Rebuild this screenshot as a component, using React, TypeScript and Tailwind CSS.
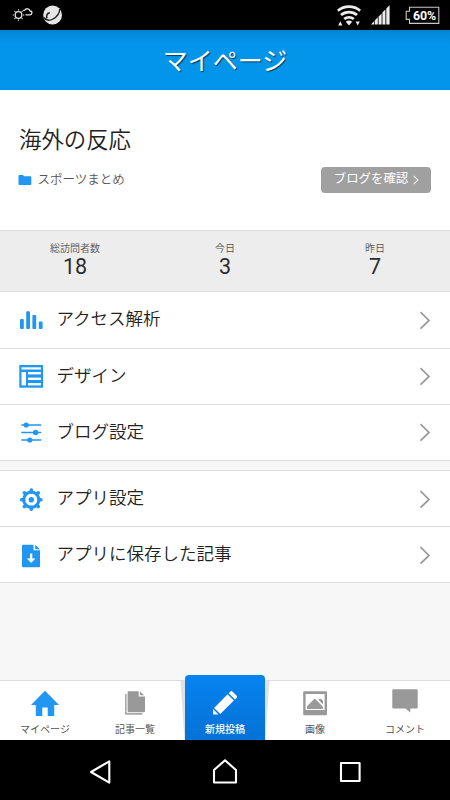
import React from 'react';

const BLUE = '#2196f3';
const GRAY = '#999999';

const StatusBar: React.FC = () => (
  <div className="flex h-[30px] shrink-0 items-center justify-between bg-black pl-3 pr-2.5">
    <div className="flex items-center gap-[9px]">
      <svg width="22" height="16" viewBox="0 0 22 16" fill="none" stroke="#e4e4e4">
        <circle cx="6.5" cy="8" r="3.3" strokeWidth="1.3" />
        <path
          d="M6.500 2.300v1.200M6.500 12.500v1.200M.8 8H2M11 8h1.200M2.500 4l.8.8M9.700 11.200l.8.8M2.500 12l.8-.8M9.700 4.800l.8-.8"
          strokeWidth="1.1"
        />
        <path d="M13.500 7.800h4.400a1.900 1.900 0 0 0 .2-3.800 3 3 0 0 0-5.400-.9 2 2 0 0 0-1.500.6" strokeWidth="1.3" />
      </svg>
      <svg width="20" height="20" viewBox="0 0 20 20">
        <circle cx="9.6" cy="10" r="9.4" fill="#e6e6e6" />
        <path
          d="M.8 12.500C3 15.600 6.500 15.900 10 14c4.200-2.200 6.600-5.800 6.800-10"
          fill="none"
          stroke="#1c1c1c"
          strokeWidth="1.4"
        />
        <path d="M6.800 7.800c-2.400.2-3.600 2.400-3 5.600" fill="none" stroke="#1c1c1c" strokeWidth="1.5" />
      </svg>
    </div>
    <div className="flex items-center">
      <svg width="24" height="21" viewBox="0 0 24 21" fill="none" stroke="#ececec" strokeWidth="2.8">
        <path d="M.8 5.800a17.400 17.400 0 0 1 22.400 0" />
        <path d="M4 10a12.400 12.400 0 0 1 16 0" />
        <path d="M7.200 14a7.800 7.800 0 0 1 9.600 0" />
        <path d="M8.800 16.800a5.400 5.400 0 0 1 6.400 0L12 20.400z" fill="#ececec" stroke="none" />
        <path d="M1.200 20.400l2.100-4.200 2.100 4.200zM18.600 16.400h4.200l-2.100 4z" fill="#ececec" stroke="none" />
      </svg>
      <svg className="ml-[10px]" width="19" height="20" viewBox="0 0 19 20" fill="#ececec">
        <path d="M0 19.400 3.200 16v3.400zM3.900 15.300l2.900-3v7.100H3.900zM7.600 11.500l3-3.100v11H7.600zM11.400 7.600l3-3.100v14.900h-3zM15.300 3.500 18.600.2v19.200h-3.300z" />
      </svg>
      <div className="relative ml-[15px] h-[19px] w-[35px]">
        <svg className="absolute inset-0" width="35" height="19" viewBox="0 0 35 19" fill="none" stroke="#c9c9c9">
          <path d="M4.500 1.200h29.300v16.200H4.500v-4H1.200V5.200h3.300z" strokeWidth="1.1" />
        </svg>
        <span className="absolute left-[8px] top-0 font-['Roboto'] text-[12.4px] font-bold leading-[19px] tracking-[-0.1px] text-white">
          60%
        </span>
      </div>
    </div>
  </div>
);

const Header: React.FC = () => (
  <header className="flex h-[60px] shrink-0 justify-center bg-[linear-gradient(#0282cd_0px,#038de0_5px,#0395ea_14px)]">
    <h1 className="text-[25px] leading-[58px] text-white [text-shadow:1px_1px_1px_rgba(0,0,0,0.6)]">マイページ</h1>
  </header>
);

const BlogCard: React.FC = () => (
  <section className="h-[140px] shrink-0 bg-white pl-[18px] pr-[19px] pt-8">
    <h2 className="pl-px text-[22.4px] font-[350] leading-[33px] text-[#222]">海外の反応</h2>
    <div className="mt-3 flex items-center justify-between">
      <div className="flex items-center">
        <svg width="14" height="12" viewBox="0 0 14 12" fill={BLUE}>
          <path d="M.5 1.800Q.5 1 1.300 1h3.600l1.300 1.300h6.300q.8 0 .8.8v7.200q0 .8-.8.8H1.300q-.8 0-.8-.8z" />
        </svg>
        <span className="ml-[5.5px] pb-0.5 text-[12.5px] font-[350] leading-5 text-[#555]">スポーツまとめ</span>
      </div>
      <button className="flex h-[26px] w-[110px] items-center justify-center rounded bg-[#a0a0a0] pb-1 pl-0.5 text-[12.4px] leading-5 text-white">
        ブログを確認
        <svg className="ml-1 mt-[3px]" width="8" height="10" viewBox="0 0 8 10" fill="none" stroke="#eee" strokeWidth="1.1">
          <path d="M1.600.8 6 5 1.600 9.200" />
        </svg>
      </button>
    </div>
  </section>
);

const stats = [
  { label: '総訪問者数', value: 18 },
  { label: '今日', value: 3 },
  { label: '昨日', value: 7 },
];

const Stats: React.FC = () => (
  <section className="grid h-[62px] shrink-0 grid-cols-3 border-y border-[#dcdcdc] bg-[#ededed] pt-[9px] text-center">
    {stats.map((s) => (
      <div key={s.label}>
        <div className="text-[10px] font-[350] leading-[15px] text-[#555]">{s.label}</div>
        <div className="font-['Roboto'] text-[21.5px] leading-[23px] text-[#2c2c2c]">{s.value}</div>
      </div>
    ))}
  </section>
);

const ChartIcon = () => (
  <svg width="26" height="26" viewBox="0 0 26 26" fill={BLUE}>
    <rect x="2" y="12" width="3.8" height="10" rx="1" />
    <rect x="8.2" y="4.2" width="3.8" height="17.8" rx="1" />
    <rect x="14.4" y="8" width="3.8" height="14" rx="1" />
    <rect x="20.8" y="14.4" width="3.8" height="7.6" rx="1" />
  </svg>
);

const LayoutIcon = () => (
  <svg width="26" height="26" viewBox="0 0 26 26">
    <rect x="1.3" y="2" width="23.8" height="22.7" fill={BLUE} />
    <g fill="#fff">
      <rect x="3.500" y="4.300" width="19.400" height="2.200" />
      <rect x="3.500" y="9" width="4.500" height="13.400" />
      <rect x="10" y="9" width="12.900" height="2.400" />
      <rect x="10" y="14.600" width="12.900" height="2.400" />
      <rect x="10" y="20" width="12.900" height="2.400" />
    </g>
  </svg>
);

const SlidersIcon = () => (
  <svg width="26" height="26" viewBox="0 0 26 26" fill={BLUE} stroke={BLUE} strokeWidth="1.5">
    <path d="M3.300 6h19.900M3.300 13.400h19.900M3.300 21h19.900" />
    <g stroke="none">
      <circle cx="8.2" cy="6" r="2.6" />
      <circle cx="17.6" cy="13.4" r="2.6" />
      <circle cx="11.8" cy="21" r="2.6" />
    </g>
  </svg>
);

const GearIcon = () => (
  <svg width="26" height="26" viewBox="0 0 26 26" fill="none" stroke={BLUE}>
    <circle cx="13.3" cy="13.7" r="7.6" strokeWidth="3" />
    <circle cx="13.3" cy="13.7" r="2.7" fill={BLUE} stroke="none" />
    <path
      d="M13.300 4.100v2M13.300 21.300v2M3.700 13.700h2M20.900 13.700h2M6.400 6.800l1.300 1.300M18.900 19.300l1.300 1.300M6.400 20.600l1.300-1.300M18.900 8.100l1.300-1.300"
      strokeWidth="3.6"
      strokeLinecap="round"
    />
  </svg>
);

const SavedFileIcon = () => (
  <svg width="26" height="26" viewBox="0 0 26 26">
    <path d="M5 2.700h10.500v5.500H22v16.100q0 1-1 1H5q-1 0-1-1V3.700q0-1 1-1z" fill={BLUE} />
    <path d="M17.200 2.700 22 7.300h-4.800z" fill={BLUE} />
    <path d="M12 11.500h2.300v4.900h3.100l-4.250 4.600-4.250-4.600H12z" fill="#fff" />
  </svg>
);

interface RowProps {
  icon: React.ReactNode;
  label: string;
}

const Row: React.FC<RowProps> = ({ icon, label }) => (
  <li className="flex h-14 items-center border-b border-[#dcdcdc] bg-white px-[18px] pb-px">
    {icon}
    <span className="ml-[12.5px] flex-1 pb-[3px] text-[17.5px] font-[350] leading-[26px] text-[#222]">{label}</span>
    <svg width="14" height="20" viewBox="0 0 14 20" fill="none" stroke="#999" strokeWidth="1.7">
      <path d="M2.500 2.200 11 10.400 2.500 18.600" />
    </svg>
  </li>
);

interface TabProps {
  icon: React.ReactNode;
  label: string;
}

const Tab: React.FC<TabProps> = ({ icon, label }) => (
  <div className="flex flex-1 flex-col items-center pt-2">
    {icon}
    <span className="mt-0.5 text-[10px] leading-[15px] text-[#555]">{label}</span>
  </div>
);

const HomeIcon = () => (
  <svg width="30" height="30" viewBox="0 0 30 30" fill={BLUE}>
    <path d="M15 1.700 29 16h-4.800v11h-6.500v-8.400h-5.400V27H5.800V16H1z" />
  </svg>
);

const DocsIcon = () => (
  <svg width="30" height="30" viewBox="0 0 30 30" fill={GRAY}>
    <path d="M5 5h1.600v17.700q0 1.300 1.300 1.300h14.400v1.800H6.200Q5 25.800 5 24.600z" opacity=".85" />
    <path d="M8.800 2.300h9.900v5.200h6.300v14.500q0 1.200-1.200 1.200H8.800q-1.200 0-1.200-1.200V3.500q0-1.200 1.200-1.200z" />
    <path d="M19.900 2.400v3.900h4.400z" />
  </svg>
);

const ImageIcon = () => (
  <svg width="30" height="30" viewBox="0 0 30 30">
    <rect x="3.2" y="2.3" width="23.8" height="24" rx="1" fill={GRAY} />
    <path d="M5.600 5h19v16h-19z" fill="#fff" />
    <path d="M7 20v-2.700L14.700 9.400 22.800 17.600V20z" fill={GRAY} />
    <path d="M18.400 10.400q2.500-1.800 4.600 1.300v3.900z" fill={GRAY} />
  </svg>
);

const CommentIcon = () => (
  <svg width="30" height="30" viewBox="0 0 30 30" fill={GRAY}>
    <path d="M3.300.2h23.400q1 0 1 1v17.200q0 1-1 1h-6.400v4.200l-4.800-4.200H3.300q-1 0-1-1V1.200q0-1 1-1z" />
  </svg>
);

const TabBar: React.FC = () => (
  <nav className="relative flex h-[60px] shrink-0 border-t border-[#dcdcdc] bg-white">
    <Tab icon={<HomeIcon />} label="マイページ" />
    <Tab icon={<DocsIcon />} label="記事一覧" />
    <div className="relative flex-1">
      <svg className="absolute left-0 top-0" width="90" height="59" viewBox="0 0 90 59" fill="#dfe1e4">
        <path d="M.5 0H8v59H4.500zM89.500 0H82v59h3.500z" />
      </svg>
      <div className="absolute inset-x-[5px] -top-[6px] bottom-0 flex flex-col items-center rounded-t bg-linear-to-b from-[#0783f0] to-[#0572d6] pt-[15px]">
        <svg width="26" height="26" viewBox="0 0 26 26" fill="#fff">
          <path d="M1.100 24.500V19.100l5.400 5.400z" />
          <path d="M2.100 17.900 15.600 4.300l6.200 6.200L8.300 24z" />
          <path d="m16.700 3.300 1.500-1.600q1.200-1.200 2.400 0l3.900 3.900q1.200 1.200 0 2.400l-1.600 1.500z" />
        </svg>
        <span className="mt-[5px] text-[10px] font-medium leading-[15px] text-white">新規投稿</span>
      </div>
    </div>
    <Tab icon={<ImageIcon />} label="画像" />
    <Tab icon={<CommentIcon />} label="コメント" />
  </nav>
);

const SystemNav: React.FC = () => (
  <div className="flex h-[60px] shrink-0 items-center justify-between bg-black px-[87px]">
    <svg width="26" height="28" viewBox="0 0 26 28" fill="none" stroke="#fff" strokeWidth="2.1" strokeLinejoin="round">
      <path d="M4 16 22.300 5.300v21.400z" />
    </svg>
    <svg width="28" height="28" viewBox="0 0 28 28" fill="none" stroke="#fff" strokeWidth="2.1" strokeLinejoin="round">
      <path d="M14 4.300 25 14v12.500H3V14z" />
    </svg>
    <svg width="26" height="28" viewBox="0 0 26 28" fill="none" stroke="#fff" strokeWidth="2.1" strokeLinejoin="round">
      <rect x="4" y="7" width="18.6" height="18" />
    </svg>
  </div>
);

const App: React.FC = () => {
  return (
    <div className="flex h-[800px] w-[450px] flex-col overflow-hidden bg-[#f7f7f7] font-['Noto_Sans_CJK_JP',sans-serif]">
      <StatusBar />
      <Header />
      <BlogCard />
      <Stats />
      <main className="flex-1">
        <ul className="[&>li:first-child]:h-[57px]">
          <Row icon={<ChartIcon />} label="アクセス解析" />
          <Row icon={<LayoutIcon />} label="デザイン" />
          <Row icon={<SlidersIcon />} label="ブログ設定" />
        </ul>
        <ul className="mt-[9px] border-t border-[#dcdcdc] [&>li]:pb-0">
          <Row icon={<GearIcon />} label="アプリ設定" />
          <Row icon={<SavedFileIcon />} label="アプリに保存した記事" />
        </ul>
      </main>
      <TabBar />
      <SystemNav />
    </div>
  );
};

export default App;
